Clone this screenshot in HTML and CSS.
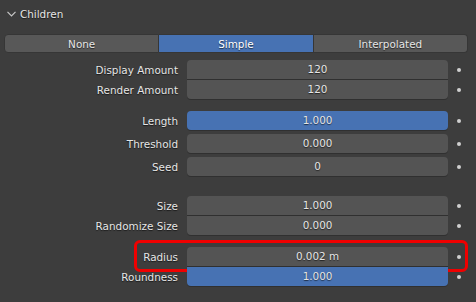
FILE: index.html
```html
<!DOCTYPE html>
<html lang="en">
<head>
  <meta charset="UTF-8">
  <title>Children</title>
  <link rel="stylesheet" href="styles.css">
</head>
<body>
  <div class="panel">
    <div class="panel-header">
      <svg class="chevron" width="11" height="8" viewBox="0 0 11 8">
        <path d="M1.5 1.8 L5.5 5.8 L9.5 1.8" fill="none" stroke="#c8c8c8" stroke-width="1.2"/>
      </svg>
      <span>Children</span>
    </div>

    <div class="segmented">
      <button class="seg">None</button>
      <button class="seg active">Simple</button>
      <button class="seg">Interpolated</button>
    </div>

    <div class="group joined first">
      <div class="row"><span class="label">Display Amount</span><div class="field">120</div><span class="dot"></span></div>
      <div class="row"><span class="label">Render Amount</span><div class="field">120</div><span class="dot"></span></div>
    </div>

    <div class="group spaced">
      <div class="row"><span class="label">Length</span><div class="field blue">1.000</div><span class="dot"></span></div>
      <div class="row"><span class="label">Threshold</span><div class="field">0.000</div><span class="dot"></span></div>
      <div class="row"><span class="label">Seed</span><div class="field">0</div><span class="dot"></span></div>
    </div>

    <div class="group joined wide">
      <div class="row"><span class="label">Size</span><div class="field">1.000</div><span class="dot"></span></div>
      <div class="row"><span class="label">Randomize Size</span><div class="field">0.000</div><span class="dot"></span></div>
    </div>

    <div class="group joined">
      <div class="row highlight"><span class="label">Radius</span><div class="field">0.002 m</div><span class="dot"></span></div>
      <div class="row"><span class="label">Roundness</span><div class="field blue">1.000</div><span class="dot"></span></div>
    </div>
  </div>
</body>
</html>
```

FILE: styles.css
```css
body {
  margin: 0;
  background: #3d3d3d;
  font-family: "DejaVu Sans", sans-serif;
  font-size: 10.4px;
  color: #e6e6e6;
}

.panel {
  width: 476px;
  height: 302px;
  overflow: hidden;
}

.panel-header {
  display: flex;
  align-items: center;
  height: 28px;
  padding-left: 6px;
  font-size: 10.4px;
  text-shadow: 0 1px 1px rgba(0, 0, 0, 0.6);
}

.chevron {
  margin-right: 3px;
}

.segmented {
  display: flex;
  margin: 6px 8px 0 4px;
  height: 19px;
}

.seg {
  flex: 1;
  margin: 0;
  padding: 0;
  border: 1px solid #363636;
  border-left: none;
  background: #585858;
  color: #e6e6e6;
  font-family: inherit;
  font-size: 10.4px;
  text-shadow: 0 1px 1px rgba(0, 0, 0, 0.6);
}

.seg:first-child {
  border-left: 1px solid #363636;
  border-radius: 4px 0 0 4px;
}

.seg:last-child {
  border-radius: 0 4px 4px 0;
}

.seg.active {
  background: #4772b3;
  color: #ffffff;
}

.group {
  display: flex;
  flex-direction: column;
  gap: 1px;
  margin-top: 12px;
}

.group.first {
  margin-top: 7px;
}

.group.wide {
  margin-top: 20px;
}

.group.spaced {
  gap: 4px;
}

.row {
  position: relative;
  display: flex;
  align-items: center;
  height: 19px;
}

.label {
  width: 178px;
  text-align: right;
  text-shadow: 0 1px 1px rgba(0, 0, 0, 0.6);
}

.field {
  width: 261px;
  height: 19px;
  margin-left: 9px;
  box-sizing: border-box;
  background: #545454;
  border-radius: 4px;
  box-shadow: 0 1px 0 #303030;
  text-align: center;
  line-height: 19px;
  text-shadow: 0 1px 1px rgba(0, 0, 0, 0.6);
}

.joined .row:first-child .field {
  border-radius: 4px 4px 0 0;
}

.joined .row:last-child .field {
  border-radius: 0 0 4px 4px;
}

.field.blue {
  background: #4772b3;
}

.dot {
  width: 4px;
  height: 4px;
  margin-left: 9px;
  border-radius: 50%;
  background: #d0d0d0;
}

/* red annotation box around the Radius row */
.highlight::after {
  content: '';
  position: absolute;
  left: 134px;
  right: 8px;
  top: -7px;
  bottom: -6px;
  border: 3px solid #f00000;
  border-radius: 6px;
}
```
